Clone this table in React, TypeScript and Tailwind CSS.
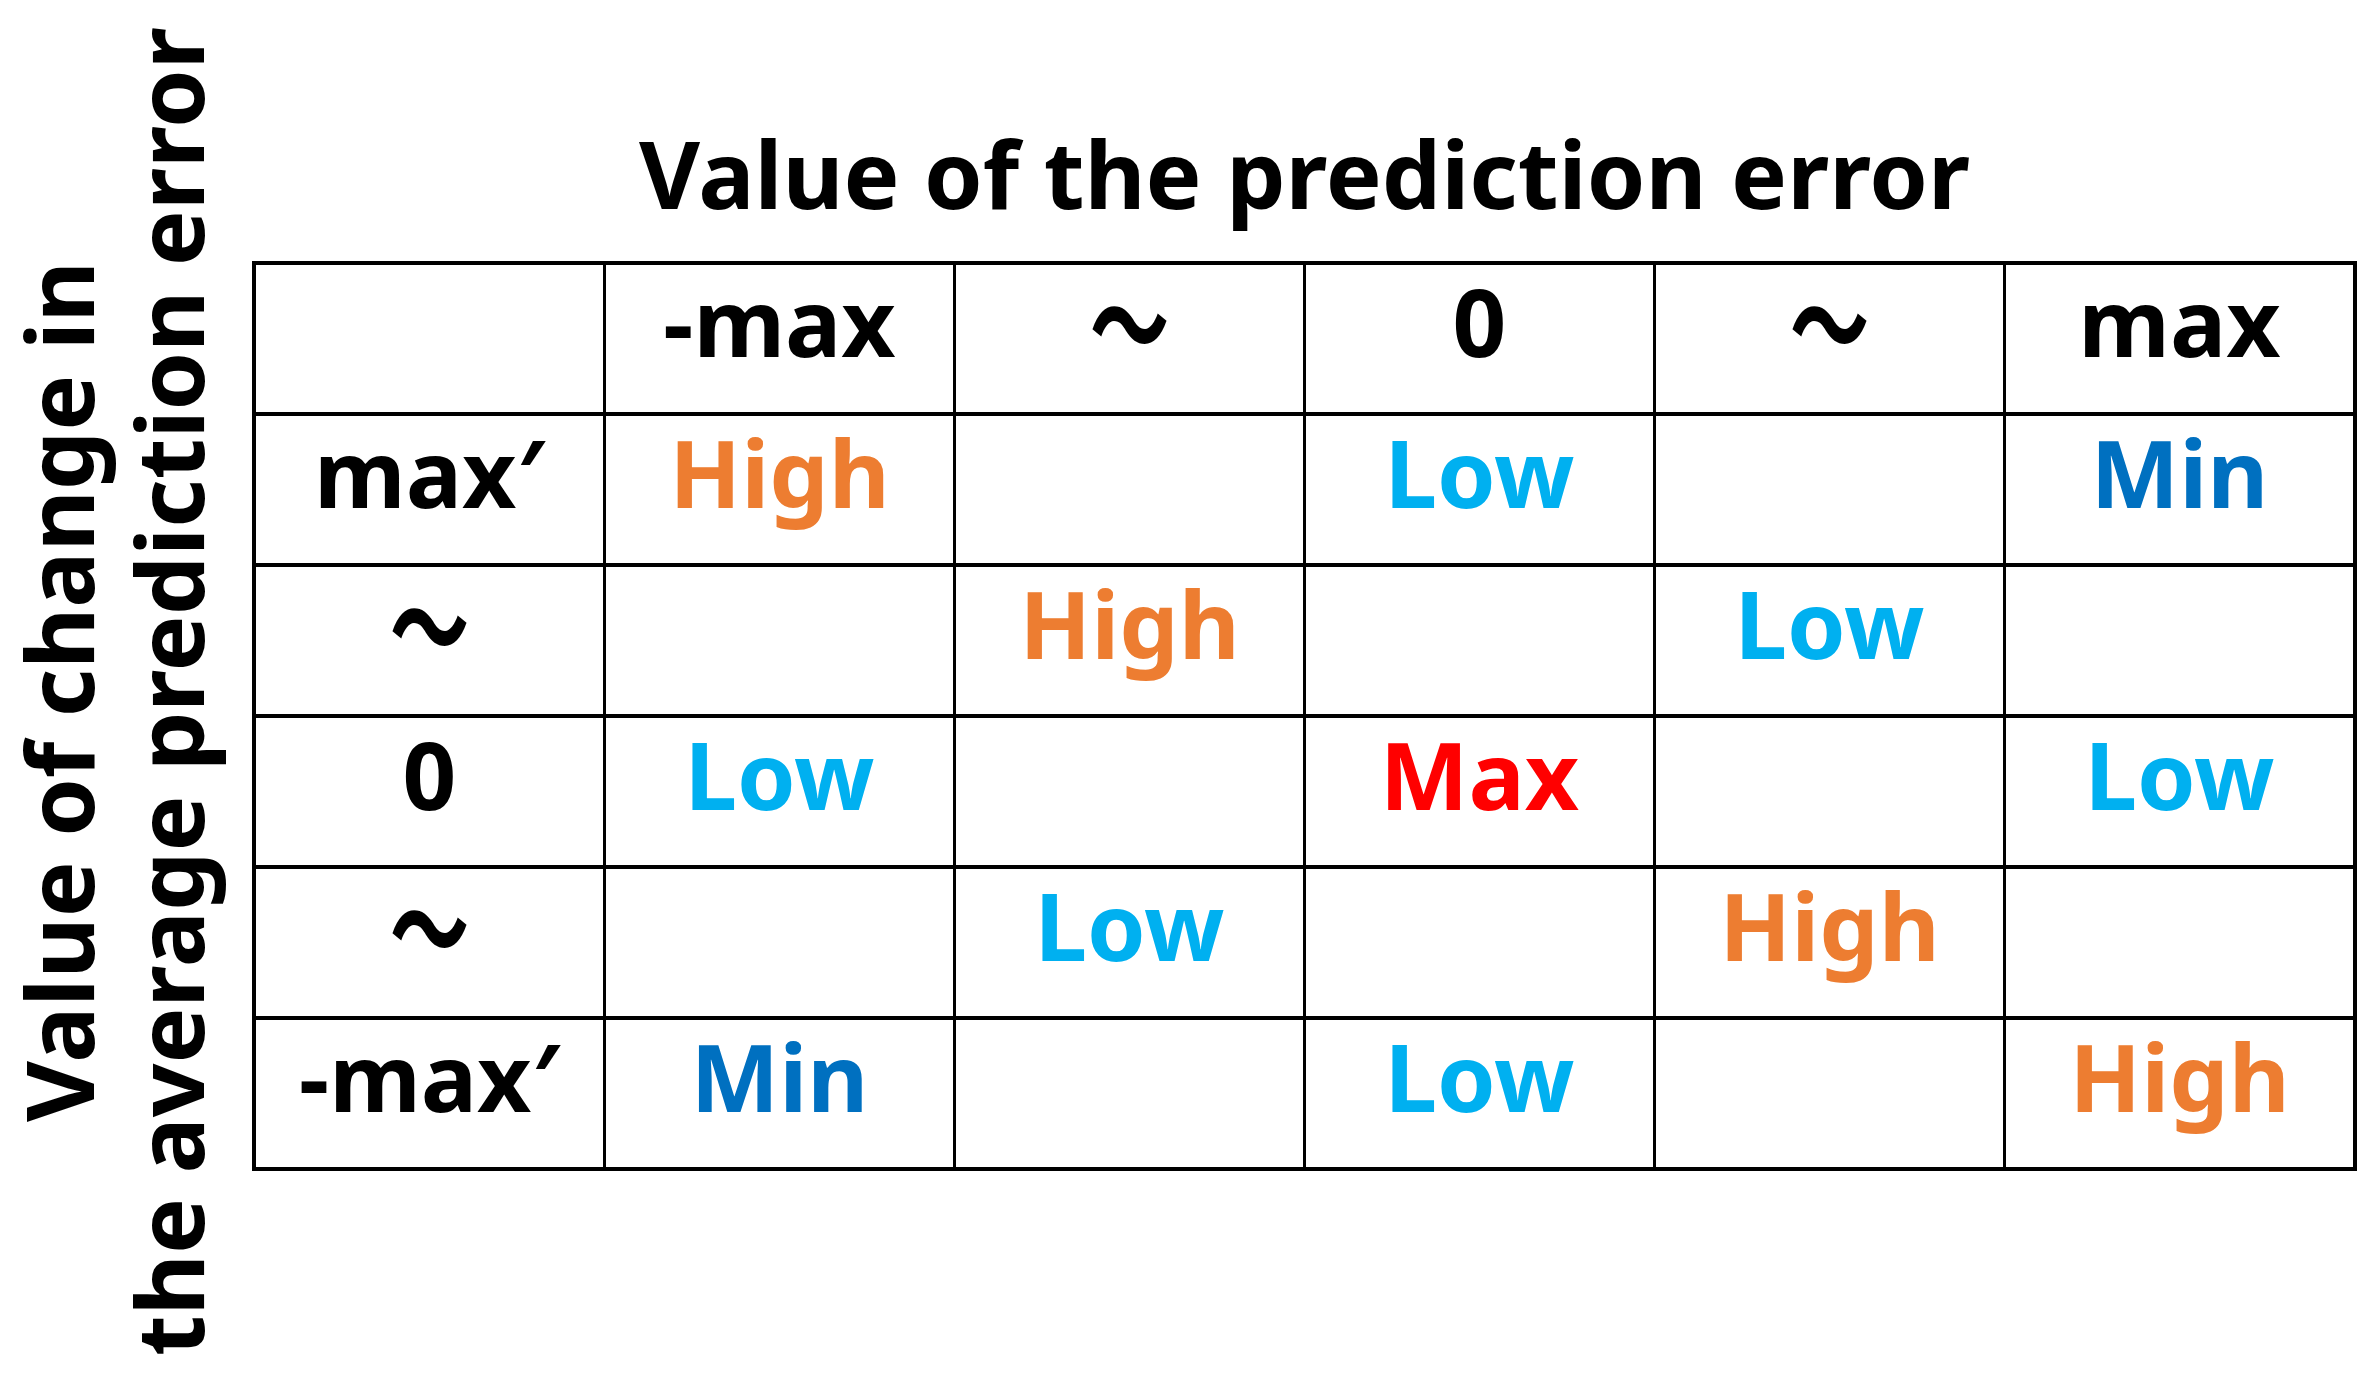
const ORANGE = "text-[#ED7D31]";
const SKY = "text-[#00B0F0]";
const BLUE = "text-[#0070C0]";
const RED = "text-[#FF0000]";

type Cell = { text: string; color?: string };

const header = ["", "-max", "〜", "0", "〜", "max"];

const rows: { label: string; cells: Cell[] }[] = [
  {
    label: "max′",
    cells: [
      { text: "High", color: ORANGE },
      { text: "" },
      { text: "Low", color: SKY },
      { text: "" },
      { text: "Min", color: BLUE },
    ],
  },
  {
    label: "〜",
    cells: [
      { text: "" },
      { text: "High", color: ORANGE },
      { text: "" },
      { text: "Low", color: SKY },
      { text: "" },
    ],
  },
  {
    label: "0",
    cells: [
      { text: "Low", color: SKY },
      { text: "" },
      { text: "Max", color: RED },
      { text: "" },
      { text: "Low", color: SKY },
    ],
  },
  {
    label: "〜",
    cells: [
      { text: "" },
      { text: "Low", color: SKY },
      { text: "" },
      { text: "High", color: ORANGE },
      { text: "" },
    ],
  },
  {
    label: "-max′",
    cells: [
      { text: "Min", color: BLUE },
      { text: "" },
      { text: "Low", color: SKY },
      { text: "" },
      { text: "High", color: ORANGE },
    ],
  },
];

function Label({ text, color }: { text: string; color?: string }) {
  if (text === "〜") {
    // wave dash, drawn with the CJK face like the original slide
    return (
      <span className="inline-block text-[80px] font-['Noto_Sans_CJK_JP',sans-serif] scale-y-150 -translate-y-[4px]">
        〜
      </span>
    );
  }
  return <span className={color}>{text}</span>;
}

function TableCell({ text, color }: Cell) {
  return (
    <div className="bg-white h-[147px] pt-[9px] text-center leading-none whitespace-nowrap">
      <Label text={text} color={color} />
    </div>
  );
}

export default function App() {
  return (
    <div className="w-[2380px] h-[1384px] bg-white flex font-['Noto_Sans',sans-serif] font-bold text-black text-[94px]">
      <div className="ml-[3px] [writing-mode:vertical-rl] rotate-180 text-center leading-[110px] whitespace-nowrap">
        Value of change in
        <br />
        the average prediction error
      </div>

      <div className="ml-[29px] pt-[117px] flex flex-col">
        <h1 className="text-center leading-[1.2] mb-[31px]">Value of the prediction error</h1>

        <div className="grid grid-cols-[repeat(6,347px)] gap-x-[3px] gap-y-[4px] p-[4px] bg-black">
          {header.map((h, i) => (
            <TableCell key={"h" + i} text={h} />
          ))}
          {rows.map((r, ri) => (
            <>
              <TableCell key={"l" + ri} text={r.label} />
              {r.cells.map((c, ci) => (
                <TableCell key={ri + "-" + ci} text={c.text} color={c.color} />
              ))}
            </>
          ))}
        </div>
      </div>
    </div>
  );
}
